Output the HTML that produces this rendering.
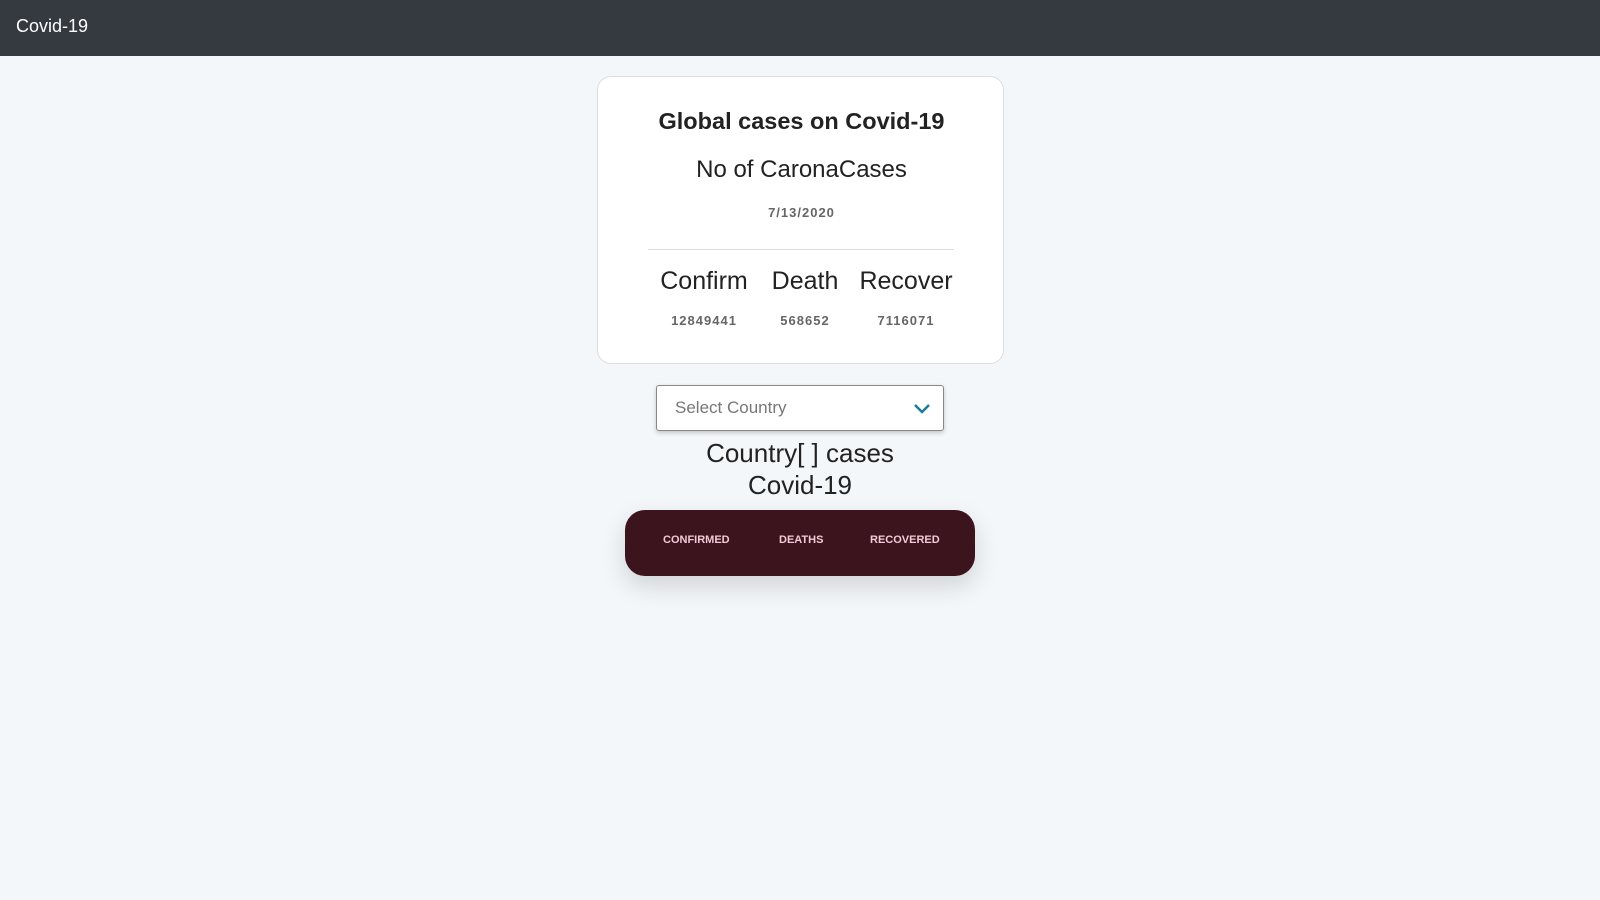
<!DOCTYPE html>
<html><head><style>
*{margin:0;padding:0;box-sizing:border-box}
body{width:1600px;height:900px;background:#f4f7fa;font-family:"Liberation Sans",sans-serif;color:#222;position:relative;overflow:hidden}
.nav{position:absolute;left:0;top:0;width:1600px;height:56px;background:#343a40}
.nav span{position:absolute;left:16px;top:16px;color:#fff;font-size:18px}
.card{position:absolute;left:597px;top:76px;width:407px;height:288px;background:#fff;border:1px solid #ddd;border-radius:14px}
.abs{position:absolute;text-align:center;white-space:nowrap}
.sel{position:absolute;left:656px;top:385px;width:288px;height:46px;background:#fff;border:1px solid #888;border-radius:3px;box-shadow:0 2px 5px rgba(0,0,0,.2)}
.pill{position:absolute;left:625px;top:510px;width:350px;height:66px;background:#3b141e;border-radius:20px;box-shadow:0 10px 25px rgba(0,0,0,.15)}
.pill span{position:absolute;top:24px;color:#f3c9d8;font-size:11px;font-weight:bold}
</style></head><body>
<div class="nav"><span>Covid-19</span></div>
<div class="card">
<div class="abs" style="left:0;width:407px;top:31px;font-size:23.5px;font-weight:bold">Global cases on Covid-19</div>
<div class="abs" style="left:0;width:407px;top:79px;font-size:24px">No of CaronaCases</div>
<div class="abs" style="left:0;width:407px;top:128px;font-size:13px;font-weight:bold;color:#666;letter-spacing:1px">7/13/2020</div>
<div style="position:absolute;left:50px;top:172px;width:306px;height:1px;background:#ddd"></div>
<div class="abs" style="left:56px;width:100px;top:190px;font-size:25px">Confirm</div>
<div class="abs" style="left:162px;width:90px;top:190px;font-size:25px">Death</div>
<div class="abs" style="left:253px;width:110px;top:190px;font-size:25px">Recover</div>
<div class="abs" style="left:56px;width:100px;top:236px;font-size:13px;font-weight:bold;color:#666;letter-spacing:1px">12849441</div>
<div class="abs" style="left:162px;width:90px;top:236px;font-size:13px;font-weight:bold;color:#666;letter-spacing:1px">568652</div>
<div class="abs" style="left:253px;width:110px;top:236px;font-size:13px;font-weight:bold;color:#666;letter-spacing:1px">7116071</div>
</div>
<div class="sel"><span style="position:absolute;left:18px;top:12px;font-size:17px;color:#777">Select Country</span>
<svg style="position:absolute;left:256px;top:17px" width="18" height="12" viewBox="0 0 18 12"><path d="M2 2 L9 9 L16 2" stroke="#1a7f94" stroke-width="2.5" fill="none"/></svg></div>
<div class="abs" style="left:600px;width:400px;top:438px;font-size:26px">Country[ ] cases</div>
<div class="abs" style="left:600px;width:400px;top:470px;font-size:26px">Covid-19</div>
<div class="pill"><span style="left:38px">CONFIRMED</span><span style="left:154px">DEATHS</span><span style="left:245px">RECOVERED</span></div>
</body></html>
